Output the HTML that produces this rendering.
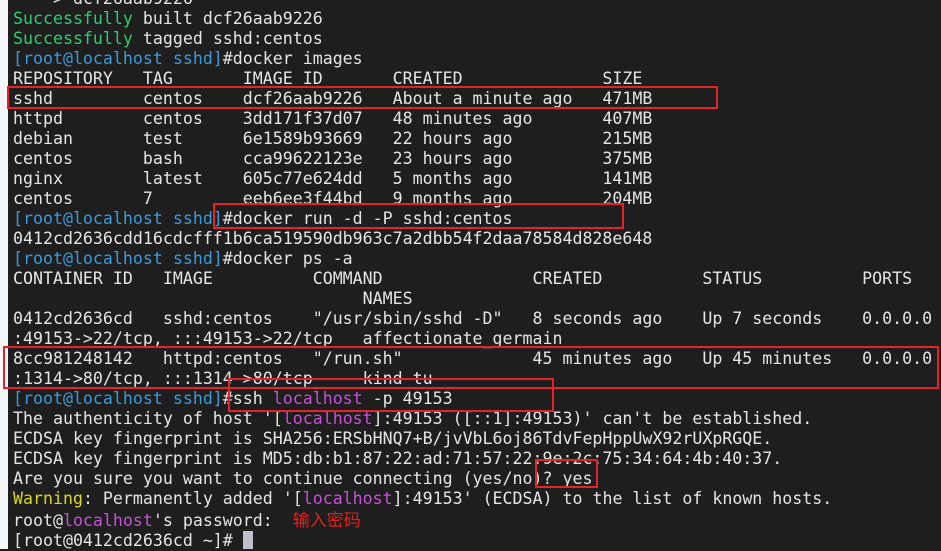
<!DOCTYPE html>
<html><head><meta charset="utf-8"><style>
html,body{margin:0;padding:0}
body{width:941px;height:549px;overflow:hidden;background:#1e1e1e;position:relative}
.strip{position:absolute;left:0;top:0;width:8px;height:549px;background:#f4f6f8}
pre{position:absolute;left:13px;top:-11px;margin:0;font-family:"DejaVu Sans Mono","Liberation Mono",monospace;font-size:16.6px;line-height:20px;color:#e4e4e4;white-space:pre}
.g{color:#2ecc71}.b{color:#3a9ad9}.m{color:#c84fd8}.y{color:#d6d620}
.cjk{font-family:"Noto Sans CJK SC",sans-serif;color:#e02020;font-size:17px}
.cur{display:inline-block;width:10px;height:18px;background:#c0c0c8;vertical-align:-3px}
.box{position:absolute;border:2px solid #e3222a;box-sizing:border-box}
</style></head><body>
<div class="strip"></div>
<pre>    &gt; dcf26aab9226
<span class="g">Successfully</span> built dcf26aab9226
<span class="g">Successfully</span> tagged sshd:centos
<span class="b">[root@localhost sshd]</span>#docker images
REPOSITORY   TAG       IMAGE ID       CREATED              SIZE
sshd         centos    dcf26aab9226   About a minute ago   471MB
httpd        centos    3dd171f37d07   48 minutes ago       407MB
debian       test      6e1589b93669   22 hours ago         215MB
centos       bash      cca99622123e   23 hours ago         375MB
nginx        latest    605c77e624dd   5 months ago         141MB
centos       7         eeb6ee3f44bd   9 months ago         204MB
<span class="b">[root@localhost sshd]</span>#docker run -d -P sshd:centos
0412cd2636cdd16cdcfff1b6ca519590db963c7a2dbb54f2daa78584d828e648
<span class="b">[root@localhost sshd]</span>#docker ps -a
CONTAINER ID   IMAGE          COMMAND               CREATED          STATUS          PORTS
                                   NAMES
0412cd2636cd   sshd:centos    "/usr/sbin/sshd -D"   8 seconds ago    Up 7 seconds    0.0.0.0
:49153-&gt;22/tcp, :::49153-&gt;22/tcp   affectionate_germain
8cc981248142   httpd:centos   "/run.sh"             45 minutes ago   Up 45 minutes   0.0.0.0
:1314-&gt;80/tcp, :::1314-&gt;80/tcp     kind_tu
<span class="b">[root@localhost sshd]</span>#ssh <span class="m">localhost</span> -p 49153
The authenticity of host '[<span class="m">localhost</span>]:49153 ([::1]:49153)' can't be established.
ECDSA key fingerprint is SHA256:ERSbHNQ7+B/jvVbL6oj86TdvFepHppUwX92rUXpRGQE.
ECDSA key fingerprint is MD5:db:b1:87:22:ad:71:57:22:9e:2c:75:34:64:4b:40:37.
Are you sure you want to continue connecting (yes/no)? yes
<span class="y">Warning</span>: Permanently added '[<span class="m">localhost</span>]:49153' (ECDSA) to the list of known hosts.
root@<span class="m">localhost</span>'s password:  <span class="cjk">输入密码</span>
[root@0412cd2636cd ~]# <span class="cur"></span></pre>
<div class="box" style="left:7px;top:86px;width:711px;height:23px"></div>
<div class="box" style="left:213px;top:203px;width:411px;height:26px"></div>
<div class="box" style="left:3px;top:346px;width:936px;height:43px"></div>
<div class="box" style="left:228px;top:378px;width:326px;height:34px"></div>
<div class="box" style="left:535px;top:459px;width:63px;height:29px"></div>
</body></html>
